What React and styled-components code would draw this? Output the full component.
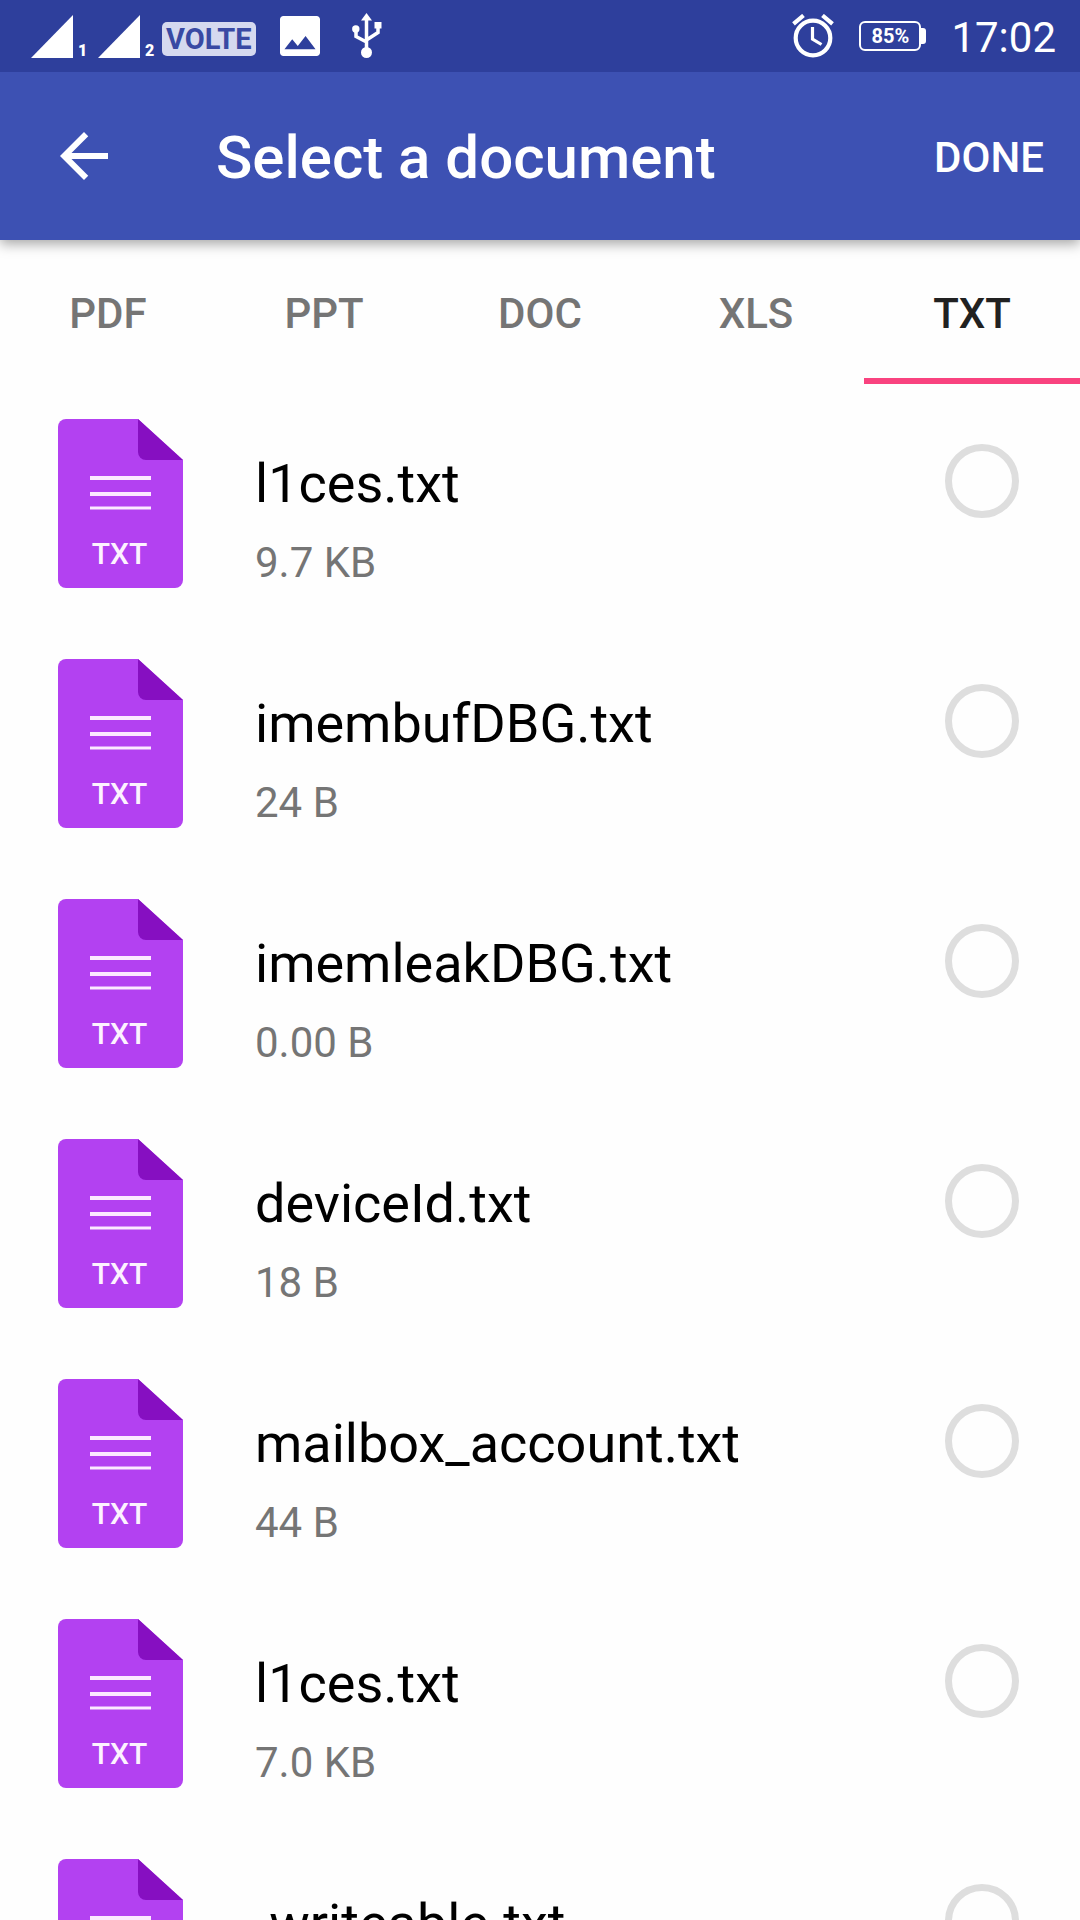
import React, { useState } from 'react';
import styled, { createGlobalStyle } from 'styled-components';

const GlobalStyle = createGlobalStyle`
  * {
    box-sizing: border-box;
  }
  body {
    margin: 0;
    background: #fefefe;
    font-family: Roboto, "Noto Sans", sans-serif;
  }
  button {
    padding: 0;
    border: 0;
    background: none;
    font-family: inherit;
    cursor: pointer;
  }
`;

const Screen = styled.div`
  display: flex;
  flex-direction: column;
  height: 100vh;
  overflow: hidden;
`;

/* status bar */
const StatusBar = styled.div`
  position: relative;
  z-index: 2;
  display: flex;
  flex: none;
  align-items: center;
  justify-content: space-between;
  height: 72px;
  padding: 0 24px 0 31px;
  background: #2e3f9c;
  color: #fff;
`;

const StatusGroup = styled.div`
  display: flex;
  align-items: center;
  gap: ${props => props.$gap}px;
`;

const Signal = styled.div`
  display: flex;
  align-items: flex-end;
  gap: 4px;
  width: 60px;
  font-size: 16px;
  font-weight: 900;
  line-height: 14px;
`;

const Volte = styled.span`
  margin-top: 6px;
  padding: 0 4px;
  border-radius: 5px;
  background: #d5d9ef;
  color: #3949a3;
  font-size: 29px;
  font-weight: 700;
  line-height: 34px;
`;

const Battery = styled.div`
  display: flex;
  align-items: center;
  &::after {
    content: '';
    width: 5px;
    height: 16px;
    border-radius: 0 3px 3px 0;
    background: #fff;
  }
`;

const BatteryLevel = styled.span`
  width: 62px;
  border: 2px solid #fff;
  border-radius: 6px;
  font-size: 20px;
  font-weight: 700;
  line-height: 26px;
  text-align: center;
`;

const Clock = styled.time`
  padding-top: 4px;
  font-size: 42px;
  line-height: 48px;
`;

/* toolbar */
const Toolbar = styled.header`
  position: relative;
  z-index: 1;
  display: flex;
  flex: none;
  align-items: center;
  height: 168px;
  padding: 0 36px 0 48px;
  background: #3d51b3;
  color: #fff;
  box-shadow: 0 4px 12px rgba(0, 0, 0, 0.35);
`;

const BackButton = styled.button`
  width: 72px;
  height: 72px;
  color: inherit;
`;

const Title = styled.h1`
  flex: 1;
  margin: 0 0 0 96px;
  padding-top: 4px;
  font-size: 60px;
  font-weight: 500;
  line-height: 72px;
`;

const DoneButton = styled.button`
  padding-top: 4px;
  color: inherit;
  font-size: 42px;
  font-weight: 500;
  line-height: 48px;
`;

/* tabs */
const Tabs = styled.nav`
  display: flex;
  flex: none;
  height: 144px;
`;

const Tab = styled.button`
  && {
    flex: 1;
    padding-top: 10px;
    border-bottom: 6px solid ${props => (props.$active ? '#f9437f' : 'transparent')};
    color: ${props => (props.$active ? '#212121' : '#757575')};
    font-size: 42px;
    font-weight: 500;
    line-height: 48px;
  }
`;

/* files */
const FileList = styled.ul`
  flex: 1;
  min-height: 0;
  margin: 0;
  padding: 0;
  overflow-y: auto;
  list-style: none;
  scrollbar-width: none;
`;

const FileRow = styled.label`
  display: flex;
  align-items: flex-start;
  height: 240px;
  padding: 35px 61px 0 58px;
  cursor: pointer;
`;

const FileInfo = styled.div`
  display: flex;
  flex: 1;
  flex-direction: column;
  gap: 23px;
  min-width: 0;
  padding: 33px 0 0 72px;
`;

const FileName = styled.span`
  color: #000;
  font-size: 54px;
  line-height: 64px;
`;

const FileSize = styled.span`
  color: #757575;
  font-size: 42px;
  line-height: 48px;
`;

const Check = styled.input`
  width: 74px;
  height: 74px;
  margin: 25px 0 0;
  border: 7px solid #dedede;
  border-radius: 50%;
  appearance: none;
  cursor: pointer;
  &:checked {
    border-color: #f9437f;
    background: #f9437f;
  }
`;

const SignalIcon = () => (
  <svg width="43" height="43" viewBox="0 0 43 43" fill="#fff">
    <path d="M42 0v43H0z" />
  </svg>
);

const ImageIcon = () => (
  <svg width="40" height="40" viewBox="3 3 18 18" fill="#fff">
    <path d="M21 19.5v-15c0-.8-.7-1.5-1.5-1.5h-15C3.7 3 3 3.7 3 4.5v15c0 .8.7 1.5 1.5 1.5h15c.8 0 1.5-.7 1.5-1.5zM8.500 13.5l2.5 3.01L14.5 12l4.500 6H5l3.500-4.500z" />
  </svg>
);

const UsbIcon = () => (
  <svg width="30" height="46" viewBox="0 0 30 46" fill="#fff">
    <path d="M14.500 0L20 7.500H9z" />
    <path d="M14.500 6v34M4 16v7.500l10.500 5.500M26 14v5.500l-11.500 7.500" fill="none" stroke="#fff" strokeWidth="3.500" />
    <circle cx="14.500" cy="39.500" r="5.500" />
    <circle cx="3.800" cy="16" r="3.700" />
    <path d="M22.500 9h7v6.500h-7z" />
  </svg>
);

const AlarmIcon = () => (
  <svg width="42" height="44" viewBox="0 0 42 44" fill="none" stroke="#fff">
    <circle cx="21" cy="24" r="17.300" strokeWidth="4.200" />
    <path d="M20.500 13v12l9 5.500" strokeWidth="3.200" />
    <path d="M1.500 9.800L11.500 1.500M30.500 1.500l10 8.300" strokeWidth="4.200" />
  </svg>
);

const BackIcon = () => (
  <svg width="72" height="72" viewBox="0 0 24 24" fill="currentColor">
    <path d="M20 11H7.830l5.590-5.590L12 4l-8 8 8 8 1.410-1.410L7.830 13H20v-2z" />
  </svg>
);

const TxtIcon = () => (
  <svg width="125" height="169" viewBox="0 0 125 169">
    <path d="M8 0h72l45 41v120a8 8 0 0 1-8 8H8a8 8 0 0 1-8-8V8a8 8 0 0 1 8-8z" fill="#b341f1" />
    <path d="M80 0l45 41H88a8 8 0 0 1-8-8z" fill="#860fc1" />
    <path d="M32 57h61v4H32zM32 73h61v4H32zM32 87.500h61v3H32z" fill="#fbeaff" />
    <text x="61.500" y="144.500" fill="#fdf3ff" fontSize="30" fontWeight="500" textAnchor="middle">TXT</text>
  </svg>
);

const types = ['PDF', 'PPT', 'DOC', 'XLS', 'TXT'];

const files = [
  { name: 'l1ces.txt', size: '9.7 KB' },
  { name: 'imembufDBG.txt', size: '24 B' },
  { name: 'imemleakDBG.txt', size: '0.00 B' },
  { name: 'deviceId.txt', size: '18 B' },
  { name: 'mailbox_account.txt', size: '44 B' },
  { name: 'l1ces.txt', size: '7.0 KB' },
  { name: '.writeable.txt', size: '0.00 B' },
];

export default function App() {
  const [active, setActive] = useState('TXT');

  return (
    <Screen>
      <GlobalStyle />
      <StatusBar>
        <StatusGroup $gap={32}>
          <StatusGroup $gap={24}>
            <StatusGroup $gap={4}>
              <StatusGroup $gap={7}>
                <Signal><SignalIcon />1</Signal>
                <Signal><SignalIcon />2</Signal>
              </StatusGroup>
              <Volte>VOLTE</Volte>
            </StatusGroup>
            <ImageIcon />
          </StatusGroup>
          <UsbIcon />
        </StatusGroup>
        <StatusGroup $gap={25}>
          <AlarmIcon />
          <Battery><BatteryLevel>85%</BatteryLevel></Battery>
          <Clock>17:02</Clock>
        </StatusGroup>
      </StatusBar>

      <Toolbar>
        <BackButton aria-label="Back"><BackIcon /></BackButton>
        <Title>Select a document</Title>
        <DoneButton>DONE</DoneButton>
      </Toolbar>

      <Tabs>
        {types.map(type => (
          <Tab key={type} $active={type === active} onClick={() => setActive(type)}>
            {type}
          </Tab>
        ))}
      </Tabs>

      <FileList>
        {files.map((file, i) => (
          <li key={i}>
            <FileRow htmlFor={`file-${i}`}>
              <TxtIcon />
              <FileInfo>
                <FileName>{file.name}</FileName>
                <FileSize>{file.size}</FileSize>
              </FileInfo>
              <Check type="checkbox" id={`file-${i}`} />
            </FileRow>
          </li>
        ))}
      </FileList>
    </Screen>
  );
}
